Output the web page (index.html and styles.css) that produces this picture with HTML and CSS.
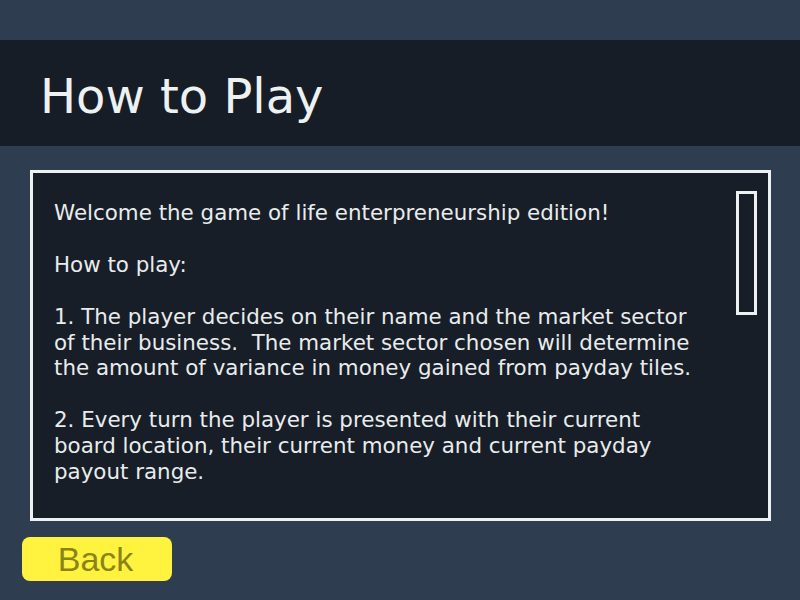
FILE: index.html
```html
<!DOCTYPE html>
<html lang="en">
<head>
<meta charset="utf-8">
<title>How to Play</title>
<link rel="stylesheet" href="styles.css">
</head>
<body>
<div class="screen">
  <div class="top-gap"></div>
  <header class="header">
    <h1 class="title">How to Play</h1>
  </header>
  <main class="panel">
    <div class="panel-text">Welcome the game of life enterpreneurship edition!

How to play:

1. The player decides on their name and the market sector
of their business.  The market sector chosen will determine
the amount of variance in money gained from payday tiles.

2. Every turn the player is presented with their current
board location, their current money and current payday
payout range.</div>
    <div class="scrollbar"></div>
  </main>
  <footer class="footer">
    <button class="back-btn" type="button">Back</button>
  </footer>
</div>
</body>
</html>
```

FILE: styles.css
```css
html, body {
  margin: 0;
  padding: 0;
  background: #2e3e50;
}

.screen {
  width: 800px;
  height: 600px;
  overflow: hidden;
  display: flex;
  flex-direction: column;
  background: #2e3e50;
}

.top-gap {
  height: 40px;
}

.header {
  height: 106px;
  box-sizing: border-box;
  background: #171d26;
  padding: 28px 0 0 40px;
}

.title {
  margin: 0;
  font-family: "DejaVu Sans", sans-serif;
  font-weight: normal;
  font-size: 48px;
  line-height: 56px;
  color: #eef1f2;
}

.panel {
  margin: 24px 0 0 30px;
  width: 741px;
  height: 351px;
  box-sizing: border-box;
  border: 3px solid #eef1f2;
  background: #171e27;
  display: flex;
  justify-content: space-between;
  align-items: flex-start;
}

.panel-text {
  padding: 27px 0 0 21px;
  font-family: "DejaVu Sans", sans-serif;
  font-size: 21.4px;
  line-height: 25.9px;
  color: #e9eced;
  white-space: pre;
}

.scrollbar {
  margin: 18px 11px 0 0;
  width: 21px;
  height: 124px;
  box-sizing: border-box;
  border: 3px solid #eef1f2;
  flex-shrink: 0;
}

.footer {
  padding: 16px 0 0 22px;
}

.back-btn {
  width: 150px;
  height: 44px;
  border: none;
  border-radius: 8px;
  background: #fff33f;
  color: #8a8418;
  font-family: "Liberation Sans", Arial, sans-serif;
  font-size: 34px;
  padding: 0 3px 0 0;
  display: flex;
  align-items: center;
  justify-content: center;
}
```
